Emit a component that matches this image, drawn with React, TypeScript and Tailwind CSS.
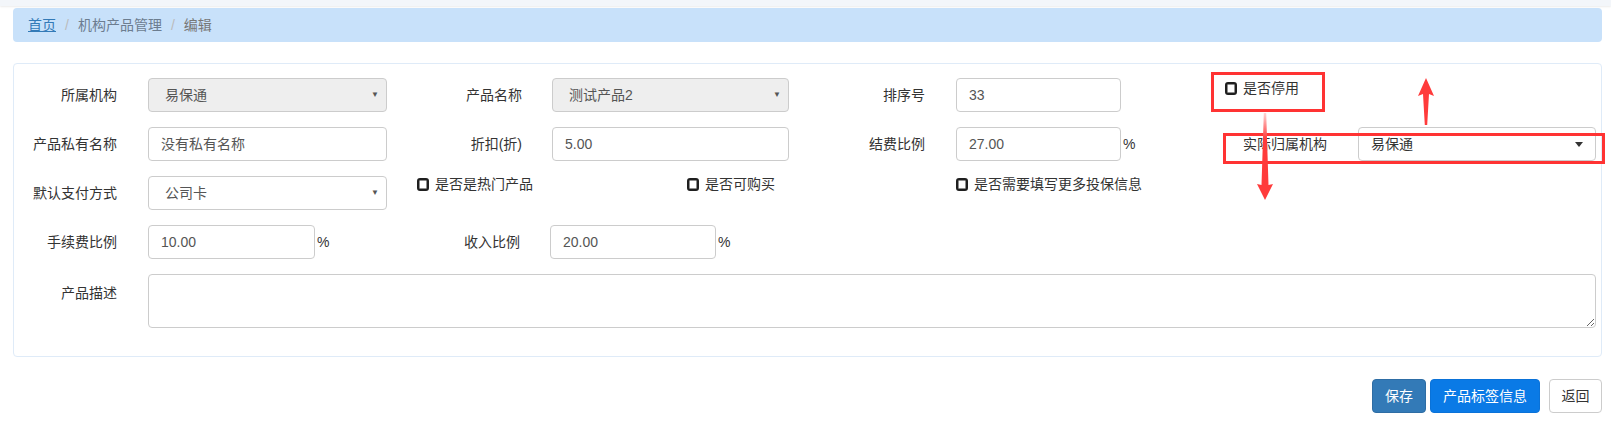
import React from 'react';

// Product edit form (机构产品管理 / 编辑)

const Label: React.FC<{ text: string; className: string }> = ({ text, className }) => (
  <div className={`text-right text-[14px] text-[#333] shrink-0 ${className}`}>{text}</div>
);

const SelectBox: React.FC<{ value: string; disabled?: boolean; className: string; bootstrap?: boolean }> = ({
  value,
  disabled,
  className,
  bootstrap,
}) => (
  <div
    className={`h-[34px] shrink-0 flex items-center justify-between border border-[#ccc] rounded-[4px] text-[14px] ${
      disabled ? 'bg-[#eee] text-[#555]' : 'bg-white text-[#555]'
    } ${className}`}
  >
    <span className={bootstrap ? 'pl-[12px] text-[#333]' : 'pl-[16px]'}>{value}</span>
    {bootstrap ? (
      <span className="mr-[12px] w-0 h-0 border-x-[4px] border-x-transparent border-t-[5px] border-t-[#333]" />
    ) : (
      <span className="mr-[7px] text-[8px] text-[#555]">▼</span>
    )}
  </div>
);

const TextInput: React.FC<{ value: string; className: string }> = ({ value, className }) => (
  <div
    className={`h-[34px] shrink-0 flex items-center border border-[#ccc] rounded-[4px] bg-white pl-[12px] text-[14px] text-[#555] ${className}`}
  >
    {value}
  </div>
);

const Check: React.FC<{ text: string; className?: string }> = ({ text, className }) => (
  <div className={`flex items-start shrink-0 pt-[1px] ${className ?? ''}`}>
    <span className="mt-[1px] w-[12px] h-[13px] border-2 border-[#1f1f1f] rounded-[3px] bg-white shadow-[inset_0_0_0_0.5px_#1f1f1f]" />
    <span className="ml-[6px] text-[14px] leading-[20px] text-[#333] -mt-[3px]">{text}</span>
  </div>
);

const Pct: React.FC = () => <span className="w-[12px] pl-[2px] shrink-0 text-[14px] text-[#333]">%</span>;

export default function App() {
  return (
    <div className="relative w-[1611px] h-[429px] bg-white overflow-hidden font-['Liberation_Sans','Noto_Sans_CJK_SC',sans-serif]">
      <div className="h-[6px] bg-[#f3f6fa] shadow-[0_1px_2px_rgba(0,0,0,0.08)]" />

      {/* breadcrumb */}
      <div className="ml-[13px] mr-[9px] mt-[2px] h-[34px] rounded-[4px] bg-[#c8e1fa] flex items-center pl-[15px] text-[14px]">
        <span className="text-[#337ab7] underline">首页</span>
        <span className="px-[9px] text-[#bbb]">/</span>
        <span className="text-[#6c7d90]">机构产品管理</span>
        <span className="px-[9px] text-[#bbb]">/</span>
        <span className="text-[#777]">编辑</span>
      </div>

      {/* form panel */}
      <div className="ml-[13px] mr-[9px] mt-[21px] border border-[#dfebf8] rounded-[4px] pt-[14px] pb-[28px] flex flex-col gap-[15px]">
        <div className="flex items-center h-[34px]">
          <Label text="所属机构" className="w-[103px]" />
          <SelectBox value="易保通" disabled className="ml-[31px] w-[239px]" />
          <Label text="产品名称" className="w-[135px]" />
          <SelectBox value="测试产品2" disabled className="ml-[30px] w-[237px]" />
          <Label text="排序号" className="w-[136px]" />
          <TextInput value="33" className="ml-[31px] w-[165px]" />
          <Check text="是否停用" className="ml-[104px] self-start mt-[2px]" />
        </div>

        <div className="flex items-center h-[34px]">
          <Label text="产品私有名称" className="w-[103px]" />
          <TextInput value="没有私有名称" className="ml-[31px] w-[239px]" />
          <Label text="折扣(折)" className="w-[135px]" />
          <TextInput value="5.00" className="ml-[30px] w-[237px]" />
          <Label text="结费比例" className="w-[136px]" />
          <TextInput value="27.00" className="ml-[31px] w-[165px]" />
          <Pct />
          <Label text="实际归属机构" className="w-[194px]" />
          <SelectBox value="易保通" bootstrap className="ml-[31px] w-[238px]" />
        </div>

        <div className="flex items-start h-[34px]">
          <Label text="默认支付方式" className="w-[103px] self-center" />
          <SelectBox value="公司卡" className="ml-[31px] w-[239px]" />
          <Check text="是否是热门产品" className="ml-[30px] w-[270px]" />
          <Check text="是否可购买" className="w-[269px]" />
          <Check text="是否需要填写更多投保信息" />
        </div>

        <div className="flex items-center h-[34px]">
          <Label text="手续费比例" className="w-[103px]" />
          <TextInput value="10.00" className="ml-[31px] w-[167px]" />
          <Pct />
          <Label text="收入比例" className="w-[193px]" />
          <TextInput value="20.00" className="ml-[30px] w-[166px]" />
          <Pct />
        </div>

        <div className="flex items-start">
          <Label text="产品描述" className="w-[103px] pt-[9px]" />
          <textarea className="ml-[31px] w-[1448px] h-[54px] border border-[#ccc] rounded-[4px] bg-white" />
        </div>
      </div>

      {/* buttons */}
      <div className="mr-[9px] mt-[22px] flex justify-end text-[14px]">
        <button className="h-[34px] w-[54px] rounded-[4px] bg-[#337ab7] border border-[#2e6da4] text-white">保存</button>
        <button className="ml-[4px] h-[34px] w-[110px] rounded-[4px] bg-[#0a7ae6] border border-[#0a72d8] text-white">
          产品标签信息
        </button>
        <button className="ml-[9px] h-[34px] w-[53px] rounded-[4px] bg-white border border-[#ccc] text-[#333]">返回</button>
      </div>

      {/* red annotations */}
      <div className="absolute left-[1211px] top-[72px] w-[114px] h-[40px] border-[3px] border-[#f33]" />
      <div className="absolute left-[1223px] top-[133px] w-[382px] h-[31px] border-[3px] border-[#f33]" />
      <svg className="absolute left-0 top-0 pointer-events-none" width="1611" height="429">
        <defs>
          <linearGradient id="fade" x1="0" y1="113" x2="0" y2="200" gradientUnits="userSpaceOnUse">
            <stop offset="0" stopColor="#ffd6d6" />
            <stop offset="0.3" stopColor="#ff3b3b" />
          </linearGradient>
        </defs>
        <polygon
          points="1426,78 1434,96 1429,94 1427.2,125 1424.8,125 1423,94 1418,96"
          fill="#ff3b3b"
        />
        <polygon
          points="1263.8,113 1266.2,113 1268.5,185 1273,184 1265,200 1257,184 1261.5,185"
          fill="url(#fade)"
        />
      </svg>
    </div>
  );
}
